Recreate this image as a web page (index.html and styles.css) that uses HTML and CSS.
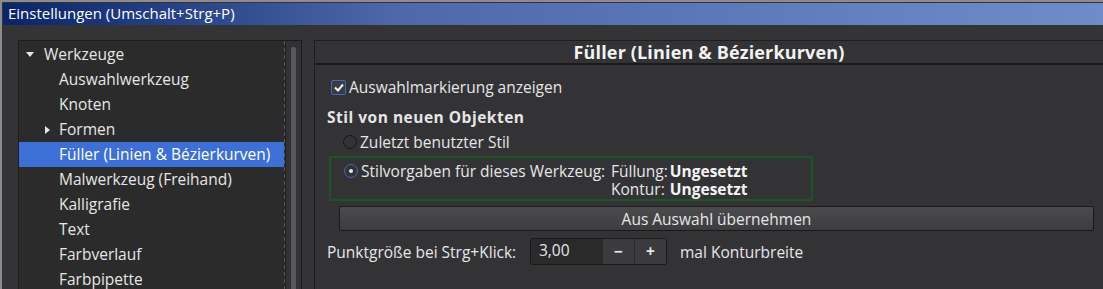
FILE: index.html
```html
<!DOCTYPE html>
<html lang="de">
<head>
<meta charset="utf-8">
<title>Einstellungen</title>
<link rel="stylesheet" href="styles.css">
</head>
<body>
<div class="window">
  <div class="titlebar">Einstellungen (Umschalt+Strg+P)</div>
  <div class="content">
    <div class="treebox">
      <ul class="tree">
        <li class="row top"><span class="exp down"></span>Werkzeuge</li>
        <li class="row child">Auswahlwerkzeug</li>
        <li class="row child">Knoten</li>
        <li class="row child"><span class="exp right"></span>Formen</li>
        <li class="row child sel">Füller (Linien &amp; Bézierkurven)</li>
        <li class="row child">Malwerkzeug (Freihand)</li>
        <li class="row child">Kalligrafie</li>
        <li class="row child">Text</li>
        <li class="row child">Farbverlauf</li>
        <li class="row child">Farbpipette</li>
      </ul>
      <div class="sep"></div>
      <div class="scroll"><div class="thumb"></div></div>
    </div>
    <div class="panel">
      <div class="header">Füller (Linien &amp; Bézierkurven)</div>
      <div class="body">
        <label class="check-row"><span class="checkbox"><svg width="10" height="9" viewBox="0 0 10 9"><path d="M1 4.5 L4 7.5 L9 1.5" fill="none" stroke="#f0f0f0" stroke-width="2"/></svg></span>Auswahlmarkierung anzeigen</label>
        <div class="section">Stil von neuen Objekten</div>
        <div class="radio-row first"><span class="radio"></span>Zuletzt benutzter Stil</div>
        <div class="stylebox">
          <div class="radio-row"><span class="radio on"></span>Stilvorgaben für dieses Werkzeug:</div>
          <div class="swatches">
            <span class="swl">Füllung:</span><b>Ungesetzt</b>
            <span class="swl">Kontur:</span><b>Ungesetzt</b>
          </div>
        </div>
        <button class="btn">Aus Auswahl übernehmen</button>
        <div class="spin-row">
          <span class="spin-label">Punktgröße bei Strg+Klick:</span>
          <div class="spin">
            <span class="entry">3,00</span>
            <span class="sbtn">&#8722;</span>
            <span class="sbtn">+</span>
          </div>
          <span class="unit">mal Konturbreite</span>
        </div>
      </div>
    </div>
  </div>
</div>
</body>
</html>
```
FILE: styles.css
```css
* { box-sizing: border-box; }
html, body { margin: 0; padding: 0; }
body {
  width: 1103px;
  height: 289px;
  overflow: hidden;
  background: #343437;
  font-family: "Open Sans", "DejaVu Sans", sans-serif;
  font-size: 15.5px;
  color: #e6e6e6;
}
.window {
  height: 289px;
  border-left: 2px solid #8c8c8c;
  border-top: 2px solid #8c8c8c;
  padding: 1px 0 0 1px;
  background: #343437;
}
.titlebar {
  height: 22px;
  line-height: 21px;
  padding-left: 5px;
  color: #ffffff;
  font-size: 15px;
  background: linear-gradient(90deg, #0a246a 0%, #4e68ab 36%, #6f8cc8 100%);
}
.content {
  display: flex;
  padding: 15px 0 0 15px;
  gap: 12px;
  height: 264px;
}
.treebox {
  width: 284px;
  display: flex;
  background: #2b2b2b;
  border: 1px solid #1c1c1c;
  border-bottom: none;
}
.tree {
  list-style: none;
  margin: 0;
  padding: 1px 0 0 0;
  width: 265px;
}
.row {
  height: 25px;
  line-height: 24px;
  white-space: nowrap;
}
.row.top { padding-left: 22px; }
.row.child { padding-left: 40px; }
.row.sel { background: #3c70d6; color: #ffffff; }
.exp {
  display: inline-block;
  width: 0; height: 0;
  vertical-align: middle;
}
.exp.down {
  border-left: 4px solid transparent;
  border-right: 4px solid transparent;
  border-top: 5px solid #e6e6e6;
  margin: 0 10px 2px -15px;
}
.exp.right {
  border-top: 4px solid transparent;
  border-bottom: 4px solid transparent;
  border-left: 5px solid #e6e6e6;
  margin: 0 9px 2px -14px;
}
.sep {
  width: 1px;
  background: repeating-linear-gradient(180deg, #5a5a5a 0 4px, transparent 4px 7px);
}
.scroll {
  width: 16px;
  border-left: 1px solid #1e1e1e;
  background: #323234;
  padding: 6px 0 0 5px;
}
.thumb {
  width: 5px;
  height: 100%;
  background: #58585a;
  border-radius: 2px 2px 0 0;
}
.panel {
  flex: 1;
  border-left: 1px solid #1e1e1e;
  border-top: 1px solid #1e1e1e;
  background: #333336;
}
.header {
  height: 24px;
  line-height: 22px;
  text-align: center;
  font-weight: bold;
  font-size: 18px;
  letter-spacing: 0.15px;
  color: #f2f2f2;
  border-bottom: 2px solid #1b1b1c;
}
.body {
  padding: 14px 0 0 12px;
  display: flex;
  flex-direction: column;
  align-items: flex-start;
}
.check-row {
  display: flex;
  align-items: center;
  height: 16px;
  margin-left: 4px;
}
.checkbox {
  width: 15px; height: 15px;
  border: 1px solid #4468b8;
  border-radius: 2px;
  background: #3a3b3e;
  display: flex;
  align-items: center;
  justify-content: center;
  margin-right: 3px;
}
.section {
  margin-top: 12px;
  font-weight: bold;
  letter-spacing: 0.5px;
  height: 20px;
  line-height: 20px;
}
.radio-row {
  display: flex;
  align-items: center;
  height: 18px;
  white-space: nowrap;
}
.radio-row.first { margin-top: 6px; margin-left: 16px; }
.radio {
  width: 14px; height: 14px;
  border-radius: 50%;
  border: 1px solid #161616;
  background: #333336;
  margin-right: 3px;
  position: relative;
}
.radio.on { border-color: #4468b8; }
.radio.on::after {
  content: "";
  position: absolute;
  left: 4px; top: 4px;
  width: 4px; height: 4px;
  border-radius: 50%;
  background: #e8e8e8;
}
.stylebox {
  margin-top: 5px;
  margin-left: 2px;
  width: 484px;
  height: 45px;
  border: 2px solid #1f5326;
  display: flex;
  align-items: flex-start;
  padding: 4px 0 0 13px;
}
.stylebox .radio-row { height: 17px; width: 267px; }
.swatches {
  display: grid;
  grid-template-columns: auto auto;
  column-gap: 2px;
  line-height: 18px;
  white-space: nowrap;
}
.swatches b { color: #f4f4f4; }
.btn {
  margin-top: 5px;
  margin-left: 12px;
  width: 755px;
  height: 25px;
  border: 1px solid #1a1a1a;
  border-radius: 2px;
  background: linear-gradient(180deg, #4b4b4e, #3d3d40);
  color: #e6e6e6;
  font-family: inherit;
  font-size: 15.5px;
  padding: 0;
}
.spin-row {
  margin-top: 7px;
  display: flex;
  align-items: center;
  height: 27px;
}
.spin-label { width: 203px; }
.spin {
  display: flex;
  height: 27px;
  border: 1px solid #1a1a1a;
  border-radius: 2px;
}
.entry {
  width: 71px;
  background: #2a2a2b;
  padding-left: 8px;
  line-height: 23px;
}
.sbtn {
  width: 32px;
  background: #3b3b3e;
  border-left: 1px solid #2a2a2a;
  text-align: center;
  font-weight: bold;
  line-height: 24px;
}
.unit { margin-left: 13px; }
```
